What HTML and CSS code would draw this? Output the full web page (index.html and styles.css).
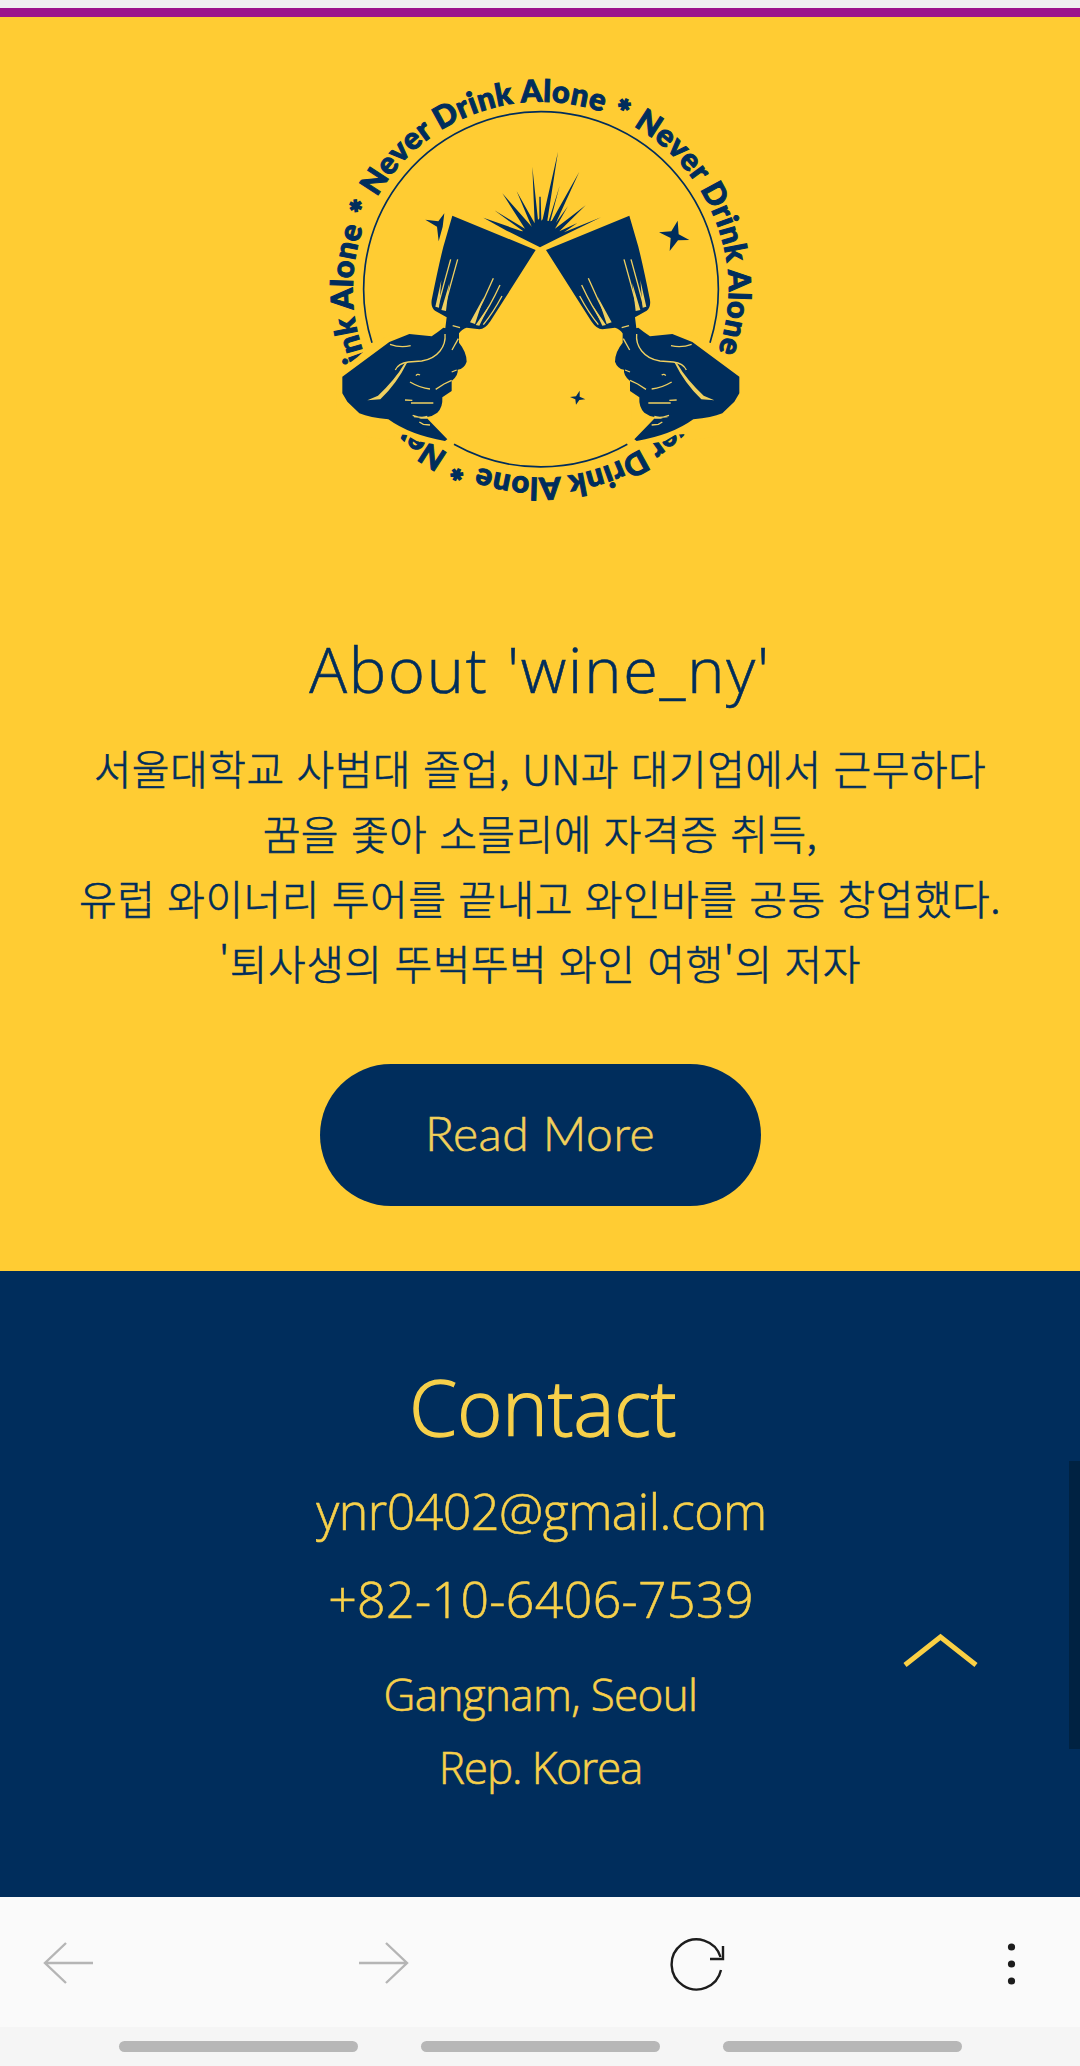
FILE: index.html
```html
<!DOCTYPE html>
<html lang="ko">
<head>
    <meta charset="UTF-8">
    <meta name="viewport" content="width=device-width, initial-scale=1.0">
    <title>wine_ny</title>
    <link rel="stylesheet" href="styles.css">
</head>
<body>

<div class="top-bar"></div>

<section class="about">
    <svg class="logo" viewBox="0 0 1380 1380">
        <defs>
            <path id="ring" d="M201.1 411.3 A564 564 0 1 1 200 965"/>
            <g id="phrase">
                <text class="ring-text" textLength="785"><textPath href="#ring" textLength="785">Never Drink Alone</textPath></text>
                <text class="ring-text star" x="692" y="137" text-anchor="middle" transform="rotate(24.4 692 689)">*</text>
            </g>
            <g id="arm">
                <!-- gap between the ring text and the hand -->
                <path class="gap" d="M80 940 L112 914 L142 892 L185 852 L290 800 L420 900 L420 1120 L425 1160 L370 1152 L320 1143 L290 1125 L262 1122 L240 1140 L170 1130 L80 1040 Z"/>
                <path d="M427 467 L677 570 L541 784 Q525 808 508 808 L470 803 Q457 806 447 820 L405 812 L410 772 L375 752 Q362 743 365 720 Q385 620 400 560 Z"/>
                <path d="M97 950 L238 846 L298 822 L365 829 Q385 815 400 803 L447 812 L447 848 Q470 876 470 905 Q463 926 443 929 Q446 945 425 963 L425 993 L397 1012 Q399 1042 382 1058 Q366 1070 348 1072 L412 1138 L405 1143 Q300 1125 235 1078 Q180 1073 148 1060 L112 1025 L97 1000 Z"/>
                <!-- highlights on the glass -->
                <g class="lines wide">
                    <path d="M422 598 Q402 670 384 738"/>
                    <path d="M443 598 Q420 680 402 748"/>
                    <path d="M550 655 Q520 725 488 785"/>
                    <path d="M570 675 Q540 740 504 792"/>
                    <path d="M576 708 Q550 757 520 794"/>
                    <path d="M428 797 L450 803"/>
                </g>
                <path class="light" d="M376 740 L394 660 L387 743 Z M394 750 L418 670 L408 753 Z M480 787 L522 710 L495 792 Z M497 795 L538 735 L508 797 Z"/>
                <!-- knuckles and fingers -->
                <g class="lines">
                    <path d="M405 822 Q408 850 390 873 Q370 898 335 903 L295 906 Q265 910 256 930"/>
                    <path d="M445 836 L426 870"/>
                    <path d="M240 853 Q270 864 302 857"/>
                    <path d="M318 947 Q322 940 330 945"/>
                    <path d="M300 966 Q330 984 360 987"/>
                    <path d="M377 988 L402 972 L425 961"/>
                    <path d="M285 1020 L307 1021 M303 1029 L370 1029"/>
                    <path d="M308 1066 L333 1074 L352 1069 M312 1070 L352 1074"/>
                    <path d="M328 1086 L340 1093 L360 1095"/>
                    <path d="M440 930 L425 936"/>
                </g>
                <path class="light" d="M291 908 Q262 968 211 1018 L172 1021 L204 1007 Q255 960 284 910 Z"/>
            </g>
        </defs>

        <g class="ring-line">
            <path d="M186 848 A532 532 0 1 1 1200 848"/>
            <path d="M432 1153 A532 532 0 0 0 952 1153"/>
        </g>
        <use href="#phrase"/>
        <use href="#phrase" transform="rotate(90 692 689)"/>
        <use href="#phrase" transform="rotate(180 692 689)"/>
        <use href="#phrase" transform="rotate(270 692 689)"/>

        <use href="#arm"/>
        <use href="#arm" transform="translate(1385 0) scale(-1 1)"/>

        <!-- splash -->
        <path d="M690 562 L627 530 L590 512 L520 473 L633 513 L640 514 L553 451 L645 506 L577 400 L660 494 L665 500 L620 394 L674 490 L667 320 L684 480 L688 475 L688 410 L692 410 L694 482 L698 478 L744 275 L712 482 L716 483 L749 377 L721 484 L725 483 L808 335 L738 488 L774 438 L735 506 L827 436 L748 514 L802 489 L762 517 L873 472 L750 532 Z"/>
        <!-- sparkles -->
        <path d="M346 479 L385 484 L403 460 L398 500 L386 544 L381 500 Z"/>
        <path d="M1047 517 L1084 514 L1103 482 L1106 523 L1138 540 L1104 541 L1079 573 L1082 534 Z"/>
        <path d="M780 1011 L798 1009 L809 992 L809 1010 L826 1018 L808 1020 L798 1034 L796 1018 Z"/>
    </svg>

    <h2 class="about-title">About 'wine_ny'</h2>
    <p class="about-text">
        서울대학교 사범대 졸업, UN과 대기업에서 근무하다<br>
        꿈을 좇아 소믈리에 자격증 취득,<br>
        유럽 와이너리 투어를 끝내고 와인바를 공동 창업했다.<br>
        '퇴사생의 뚜벅뚜벅 와인 여행'의 저자
    </p>
    <a class="read-more">Read More</a>
</section>

<section class="contact">
    <h2 class="contact-title">Contact</h2>
    <p class="email">ynr0402@gmail.com</p>
    <p class="phone">+82-10-6406-7539</p>
    <p class="address">Gangnam, Seoul</p>
    <p class="address country">Rep. Korea</p>

    <svg class="to-top" viewBox="0 0 80 40">
        <path d="M5 34 L40.5 6 L76 34"/>
    </svg>
    <div class="scroll-thumb"></div>
</section>

<nav class="toolbar">
    <svg class="icon off" viewBox="0 0 60 60"><path d="M54 30 H6 M27 10 L6 30 L27 50"/></svg>
    <svg class="icon off" viewBox="0 0 60 60"><path d="M6 30 H54 M33 10 L54 30 L33 50"/></svg>
    <svg class="icon" viewBox="0 0 60 60">
        <path d="M53 37 A25 25 0 1 1 52.5 24"/>
        <path d="M55 13 V26 H42"/>
    </svg>
    <svg class="icon dots" viewBox="0 0 60 60">
        <circle cx="29.5" cy="14" r="3.6"/>
        <circle cx="29.5" cy="31" r="3.6"/>
        <circle cx="29.5" cy="48" r="3.6"/>
    </svg>
</nav>

<div class="gesture-bar">
    <span></span>
    <span></span>
    <span></span>
</div>

</body>
</html>
```

FILE: styles.css
```css
* {
    box-sizing: border-box;
}

body {
    margin: 0;
    width: 1080px;
    font-family: "Open Sans", "Noto Sans CJK KR", sans-serif;
    font-weight: 300;
    background-color: #ffcc33;
}

h2, p {
    margin: 0;
    font-weight: 300;
    white-space: nowrap;
    -webkit-text-stroke: 0.6px currentColor;
}

.top-bar {
    height: 17px;
    background-color: #eff0f1;
    border-bottom: 9px solid #9c148c;
}

/* About */
.about {
    height: 1254px;
    padding-top: 43px;
    display: flex;
    flex-direction: column;
    align-items: center;
    background-color: #ffcc33;
    color: #002d5c;
    text-align: center;
}

.logo {
    width: 460px;
    height: 460px;
    flex: none;
    fill: #002d5c;
}

.ring-text {
    font-family: Lato, sans-serif;
    font-weight: 900;
    font-size: 92px;
    stroke: #002d5c;
    stroke-width: 3;
}

.star {
    font-size: 98px;
    stroke-width: 5;
}

.ring-line {
    fill: none;
    stroke: #002d5c;
    stroke-width: 5;
}

.gap {
    fill: #ffcc33;
}

.light {
    fill: #f0d060;
}

.lines {
    fill: none;
    stroke: #f0d060;
    stroke-width: 4;
}

.about-title {
    margin-top: 109px;
    font-size: 63px;
    line-height: 80px;
    letter-spacing: 1.8px;
}

.about-text {
    margin-top: 26px;
    font-family: "Noto Sans CJK KR", sans-serif;
    font-size: 41px;
    line-height: 65px;
    letter-spacing: 0.45px;
}

.read-more {
    width: 441px;
    height: 142px;
    margin-top: 69px;
    border-radius: 71px;
    background-color: #002d5c;
    color: #f2d05a;
    font-family: Lato, sans-serif;
    font-size: 48px;
    line-height: 138px;
    letter-spacing: 0.5px;
    -webkit-text-stroke: 0.6px currentColor;
}

/* Contact */
.contact {
    position: relative;
    height: 626px;
    padding-top: 86px;
    background-color: #002d5c;
    color: #f7d04a;
    text-align: center;
}

.contact-title {
    padding-left: 6px;
    font-size: 77px;
    line-height: 100px;
    -webkit-text-stroke: 1.4px currentColor;
}

.email {
    margin-top: 14px;
    padding-left: 3px;
    font-size: 50px;
    line-height: 80px;
    letter-spacing: -0.5px;
}

.phone {
    margin-top: 8px;
    padding-left: 2px;
    font-size: 50px;
    line-height: 80px;
    letter-spacing: 0.4px;
}

.address {
    margin-top: 18px;
    padding-left: 1px;
    font-size: 44px;
    line-height: 74px;
    letter-spacing: -0.65px;
}

.country {
    margin-top: -1px;
    letter-spacing: -1.1px;
}

.to-top {
    position: absolute;
    left: 900px;
    top: 360px;
    width: 80px;
    height: 40px;
    fill: none;
    stroke: #fbd044;
    stroke-width: 5;
}

.scroll-thumb {
    position: absolute;
    right: 0;
    top: 190px;
    width: 11px;
    height: 288px;
    background-color: #002242;
}

/* Browser bars */
.toolbar {
    height: 130px;
    padding: 2px 38px 0 39px;
    display: flex;
    justify-content: space-between;
    align-items: center;
    background-color: #fafafa;
}

.icon {
    width: 60px;
    height: 60px;
    fill: none;
    stroke: #1c1c1c;
    stroke-width: 2.4;
}

.off {
    stroke: #b5b5b5;
}

.dots {
    fill: #1c1c1c;
    stroke: none;
}

.gesture-bar {
    height: 39px;
    padding-top: 14px;
    display: flex;
    justify-content: center;
    gap: 63px;
    background-color: #f5f5f5;
}

.gesture-bar span {
    width: 239px;
    height: 11px;
    border-radius: 6px;
    background-color: #b7b7b7;
}
```
